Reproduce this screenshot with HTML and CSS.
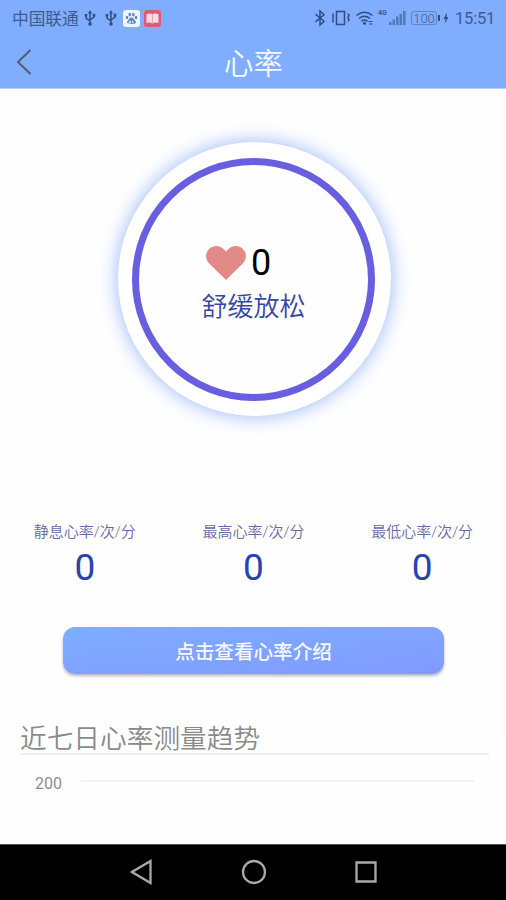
FILE: index.html
```
<!DOCTYPE html>
<html lang="zh-CN">
<head>
<meta charset="UTF-8">
<meta name="viewport" content="width=device-width, initial-scale=1.0">
<title>心率</title>
<link rel="stylesheet" href="styles.css">
</head>
<body>
<header class="header">
    <div class="status-bar">
        <span class="carrier">中国联通</span>
        <svg class="usb" width="12" height="18" viewBox="0 0 12 18"><path d="M6 3v12M2 6v3l4 3M10 6v2l-4 3"/><path class="fill" d="M6 1l2 3.500H4zM.7 5h2.600v2.600H.7zM8.700 4.800h2.600v2.600H8.700z"/><circle class="fill" cx="6" cy="15" r="1.800"/></svg>
        <svg class="usb" width="12" height="18" viewBox="0 0 12 18"><path d="M6 3v12M2 6v3l4 3M10 6v2l-4 3"/><path class="fill" d="M6 1l2 3.500H4zM.7 5h2.600v2.600H.7zM8.700 4.800h2.600v2.600H8.700z"/><circle class="fill" cx="6" cy="15" r="1.800"/></svg>
        <svg class="app-icon" width="17" height="17" viewBox="0 0 17 17">
            <rect width="17" height="17" rx="3" fill="#f0f7ff"/>
            <g fill="#5c88c8"><ellipse cx="4" cy="7.500" rx="1.300" ry="1.800"/><ellipse cx="6.800" cy="4.600" rx="1.300" ry="1.900"/><ellipse cx="10.300" cy="4.600" rx="1.300" ry="1.900"/><ellipse cx="13" cy="7.500" rx="1.300" ry="1.800"/><path d="M8.500 7.500c2 0 2.500 2 4 3.500 1.500 2-.5 3.500-4 3S3 13 4.500 11c1.500-1.500 2-3.500 4-3.500z"/></g>
            <path d="M6.300 11.200h1.400v1.600H6.300zM9.500 10.800v2h1.800" fill="none" stroke="#f0f7ff" stroke-width=".8"/>
        </svg>
        <svg class="app-icon" width="17" height="17" viewBox="0 0 17 17">
            <rect width="17" height="17" rx="3" fill="#dc5c78"/>
            <path d="M2.500 4.500Q6 2.500 8.500 4.500 11 2.500 14.500 4.500v8.500Q11 12 8.500 13.500 6 12 2.500 13z" fill="#fbdde5"/>
            <path d="M8.500 4.500v9" stroke="#e995a8" stroke-width=".8"/>
        </svg>
        <div class="status-right">
            <svg class="bluetooth" width="12" height="18" viewBox="0 0 12 18"><path d="M1.500 5.200l8.500 7-4 3.800V2l4 3.800-8.500 7"/></svg>
            <svg class="vibrate" width="20" height="18" viewBox="0 0 20 18"><path d="M5.500 2.500h8v13h-8zM2 4.500v9M17 4.500l1 2-1 2 1 2-1 2"/></svg>
            <svg class="wifi" width="20" height="18" viewBox="0 0 20 18"><path d="M1.500 6.500q8-6.500 16 0M4 9.500q5.500-4.500 11 0M6.500 12.300q3-2.500 6 0"/><circle class="fill" cx="9.500" cy="14.300" r="1.500"/><path class="thin" d="M13.500 12.500h4M14 15h3.500"/></svg>
            <span class="network">4G</span>
            <svg class="signal" width="18" height="18" viewBox="0 0 18 18"><path d="M1 13h2.500v3H1zM4.500 10.500H7V16H4.500zM8 7.500h2.500V16H8zM11.500 5H14v11h-2.500zM15 2h2.500v14H15z"/></svg>
            <span class="battery">100</span>
            <svg class="bolt" width="6" height="12" viewBox="0 0 6 12"><path d="M3.800.5L.5 7h2l-.6 4.500L5.500 5h-2z"/></svg>
            <span class="time">15:51</span>
        </div>
    </div>
    <nav class="title-bar">
        <svg class="back" width="18" height="28" viewBox="0 0 18 28"><path d="M15.500 2L3 14l12.500 12"/></svg>
        <h1>心率</h1>
    </nav>
</header>
<main class="content">
    <section class="dial">
        <div class="ring">
            <div class="reading">
                <svg width="40" height="34" viewBox="0 0 40 34"><path d="M20 34L3.200 17.500C-1 13-.8 6.500 3.200 3 7.500-.9 13.500-.8 17.500 3L20 5.500 22.500 3c4-3.800 10-3.900 14.300 0 4 3.500 4.200 10 0 14.500z"/></svg>
                <span>0</span>
            </div>
            <p class="state">舒缓放松</p>
        </div>
    </section>
    <section class="stats">
        <div class="stat"><span class="label">静息心率/次/分</span><span class="value">0</span></div>
        <div class="stat"><span class="label">最高心率/次/分</span><span class="value">0</span></div>
        <div class="stat"><span class="label">最低心率/次/分</span><span class="value">0</span></div>
    </section>
    <button class="intro-button">点击查看心率介绍</button>
    <section class="trend">
        <h2>近七日心率测量趋势</h2>
        <div class="chart-row"><span>200</span><div class="grid-line"></div></div>
    </section>
</main>
<footer class="nav-bar">
    <svg width="24" height="28" viewBox="0 0 24 28"><path d="M20.500 3v22L2 14z"/></svg>
    <svg width="26" height="28" viewBox="0 0 26 28"><circle cx="13" cy="14" r="11"/></svg>
    <svg width="24" height="28" viewBox="0 0 24 28"><path d="M2.500 4.500h19v19h-19z"/></svg>
</footer>
</body>
</html>
```

FILE: styles.css
```
* {
    box-sizing: border-box;
}
body {
    margin: 0;
    height: 900px;
    display: flex;
    flex-direction: column;
    overflow: hidden;
    background-color: #fefefe;
    font-family: Roboto, "Noto Sans CJK SC", sans-serif;
}
svg {
    display: block;
    flex: none;
}
h1, h2, p {
    margin: 0;
    font-weight: 350;
}
.header {
    height: 89px;
    background-color: #80adfd;
    border-bottom: 1px solid #b9d2fc;
}
.status-bar {
    display: flex;
    align-items: center;
    height: 36px;
    padding: 0 11px 0 12px;
    color: #3d5b91;
}
.status-bar svg {
    fill: none;
    stroke: #2f4e83;
    stroke-width: 1.5;
}
.status-bar .fill {
    fill: #2f4e83;
    stroke: none;
}
.carrier {
    width: 67px;
    padding-top: 3px;
    font-size: 16.7px;
    line-height: 24px;
    white-space: nowrap;
}
.status-bar .usb {
    margin-left: 5px;
}
.status-bar .usb + .usb {
    margin-left: 9px;
}
.status-bar .app-icon {
    margin-left: 6px;
    stroke: none;
}
.status-bar .app-icon + .app-icon {
    margin-left: 4px;
}
.status-right {
    display: flex;
    align-items: center;
    margin-left: auto;
}
.vibrate {
    margin-left: 5px;
}
.wifi {
    margin-left: 4px;
}
.wifi .thin {
    stroke-width: 1;
}
.network {
    width: 10px;
    margin: -10px 0 0 3px;
    font-size: 7px;
    font-weight: 700;
}
.status-bar .signal {
    fill: #5077b7;
    stroke: none;
}
.battery {
    position: relative;
    width: 26px;
    height: 14px;
    margin-left: 5px;
    border: 1px solid #5f85c5;
    border-radius: 3px;
    font-size: 13px;
    font-weight: 300;
    line-height: 13px;
    text-align: center;
}
.battery::after {
    content: "";
    position: absolute;
    top: 3px;
    right: -4px;
    width: 2px;
    height: 6px;
    background-color: #2f4e83;
}
.status-bar .bolt {
    margin: 0 6px 0 6px;
    fill: #2f4e83;
    stroke: none;
}
.time {
    width: 40px;
    font-size: 16.5px;
    letter-spacing: -0.2px;
    white-space: nowrap;
}
.title-bar {
    display: grid;
    grid-template-columns: 40px 1fr 40px;
    align-items: center;
    height: 52px;
}
.back {
    margin-left: 15px;
    fill: none;
    stroke: #555b6c;
    stroke-width: 2;
}
.title-bar h1 {
    padding: 3px 0 0 1px;
    color: #f3faff;
    font-size: 29.5px;
    line-height: 44px;
    text-align: center;
}
.content {
    position: relative;
    flex: 1;
    display: flex;
    flex-direction: column;
}
/* faint scrollbar track */
.content::after {
    content: "";
    position: absolute;
    top: 0;
    right: 0;
    width: 5px;
    height: 646px;
    background-color: #fbfbfb;
}
.dial {
    display: flex;
    align-items: center;
    justify-content: center;
    width: 273px;
    height: 274px;
    margin: 53px 0 0 118px;
    padding-right: 2px;
    border-radius: 50%;
    background-color: #fff;
    box-shadow: 0 0 20px 0 #96b7fb;
}
.ring {
    width: 243px;
    height: 243px;
    padding-top: 80px;
    border: 7px solid #685ee0;
    border-radius: 50%;
    background-color: #fefefe;
}
.reading {
    display: flex;
    align-items: center;
    height: 36px;
    padding-left: 67px;
}
.reading svg {
    fill: #e38988;
}
.reading span {
    margin-left: 5px;
    font-size: 36px;
    line-height: 36px;
    color: #000;
}
.state {
    margin-top: 7px;
    color: #3546a8;
    font-size: 26px;
    line-height: 38px;
    text-align: center;
}
.stats {
    display: grid;
    grid-template-columns: repeat(3, 1fr);
    margin-top: 105px;
}
.stat {
    display: flex;
    flex-direction: column;
    align-items: center;
    padding-left: 1px;
}
.label {
    color: #6669a8;
    font-size: 15px;
    font-weight: 350;
    line-height: 22px;
}
.value {
    margin-top: 2px;
    color: #2942b0;
    font-size: 37px;
    line-height: 45px;
}
.intro-button {
    width: 381px;
    height: 47px;
    margin: 37px 0 0 63px;
    padding: 4px 0 0;
    border: none;
    border-radius: 12px;
    background: linear-gradient(175deg, #7eadff, #809aff);
    box-shadow: 0 2px 3px rgba(80, 70, 100, 0.4);
    color: #f4faff;
    font-family: inherit;
    font-size: 19.6px;
    font-weight: 500;
    line-height: 43px;
}
.trend {
    margin: 43px 17px 0 20px;
}
.trend h2 {
    height: 38px;
    border-bottom: 2px solid #f0f0f0;
    color: #8a8a8a;
    font-size: 26.7px;
    line-height: 44px;
}
.chart-row {
    display: flex;
    align-items: flex-start;
    padding: 20px 15px 0;
    color: #8e8e8e;
    font-size: 16px;
    line-height: 18px;
}
.chart-row span {
    width: 46px;
}
.grid-line {
    flex: 1;
    height: 2px;
    margin-top: 5px;
    background-color: #f2f2f2;
}
.nav-bar {
    display: flex;
    gap: 87px;
    height: 56px;
    padding: 13px 0 0 130px;
    background-color: #000;
    border-top: 1px solid #555;
}
.nav-bar svg {
    fill: none;
    stroke: #aaa;
    stroke-width: 2.3;
}
```
